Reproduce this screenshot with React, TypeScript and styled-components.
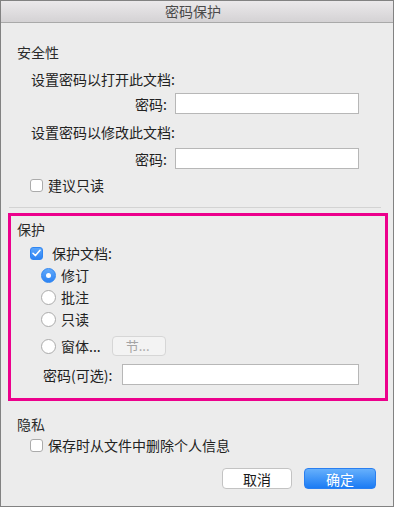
import React from "react";
import styled, { createGlobalStyle } from "styled-components";

const Global = createGlobalStyle`
  html, body { margin: 0; padding: 0; background: #ffffff; }
  body { font-family: "Noto Sans CJK SC", "Noto Sans", sans-serif; }
`;

const Window = styled.div`
  width: 394px;
  height: 507px;
  box-sizing: border-box;
  border: 1px solid #828282;
  background: #ececec;
  display: flex;
  flex-direction: column;
  font-size: 14px;
  color: #222;
`;

const TitleBar = styled.div`
  height: 21px;
  border-bottom: 1px solid #a9a9a9;
  background: linear-gradient(#ebe9eb, #d4d2d4);
  display: flex;
  align-items: center;
  justify-content: center;
  color: #4a4a4a;
  font-size: 14px;
  line-height: 21px;
  padding-right: 8px;
`;

const Body = styled.div`
  display: flex;
  flex-direction: column;
  padding: 0 5px 0 7px;
`;

const Section = styled.div<{ $top: number }>`
  display: flex;
  flex-direction: column;
  padding-left: 9px;
  margin-top: ${(p) => p.$top}px;
`;

const ProtectBox = styled.div`
  margin-top: 5px;
  border: 3px solid #ec008c;
  padding: 3px 0 13px 6px;
  display: flex;
  flex-direction: column;
`;

const Row = styled.div<{ $top?: number; $indent?: number; $h?: number }>`
  display: flex;
  align-items: center;
  height: ${(p) => p.$h ?? 20}px;
  line-height: 20px;
  margin-top: ${(p) => p.$top ?? 0}px;
  padding-left: ${(p) => p.$indent ?? 0}px;
  white-space: nowrap;
`;

const Heading = styled.div`
  height: 20px;
  line-height: 20px;
  color: #2a2a2a;
`;

const FieldLabel = styled.span<{ $w: number; $align?: string; $gap?: number }>`
  width: ${(p) => p.$w}px;
  text-align: ${(p) => p.$align ?? "right"};
  margin-right: ${(p) => p.$gap ?? 8}px;
`;

const TextInput = styled.div<{ $w: number }>`
  width: ${(p) => p.$w}px;
  height: 21px;
  box-sizing: border-box;
  background: #fff;
  border: 1px solid #b7b7b7;
`;

const Separator = styled.div`
  height: 1px;
  background: #d3d3d3;
  margin: 12px 7px 0 1px;
`;

const Box = styled.span<{ $checked?: boolean }>`
  width: 13px;
  height: 13px;
  box-sizing: border-box;
  border-radius: 3px;
  border: 1px solid ${(p) => (p.$checked ? "#2f86f2" : "#ababab")};
  background: ${(p) =>
    p.$checked ? "linear-gradient(#5aa5fb, #2d83f3)" : "#fff"};
  display: inline-flex;
  align-items: center;
  justify-content: center;
  flex: none;
`;

const CheckText = styled.span<{ $gap: number }>`
  margin-left: ${(p) => p.$gap}px;
`;

const RadioCircle = styled.span<{ $on?: boolean }>`
  width: 15px;
  height: 15px;
  box-sizing: border-box;
  border-radius: 50%;
  border: 1px solid ${(p) => (p.$on ? "#2f86f2" : "#ababab")};
  background: ${(p) => (p.$on ? "linear-gradient(#62aafb, #2d83f3)" : "#fff")};
  display: inline-flex;
  align-items: center;
  justify-content: center;
  flex: none;
  &::after {
    content: "";
    display: ${(p) => (p.$on ? "block" : "none")};
    width: 5px;
    height: 5px;
    border-radius: 50%;
    background: #fff;
  }
`;

const SmallButton = styled.div`
  margin-left: 11px;
  width: 54px;
  height: 20px;
  box-sizing: border-box;
  border: 1px solid #d6d6d6;
  border-radius: 4px;
  background: #f3f3f3;
  color: #a4a4a4;
  font-size: 13px;
  line-height: 18px;
  padding-left: 13px;
`;

const Footer = styled.div`
  display: flex;
  justify-content: flex-end;
  gap: 12px;
  margin-top: 13px;
  padding-right: 12px;
`;

const Button = styled.div<{ $primary?: boolean; $w: number }>`
  width: ${(p) => p.$w}px;
  height: 21px;
  box-sizing: border-box;
  border-radius: 4px;
  display: flex;
  align-items: center;
  justify-content: center;
  font-size: 14px;
  border: 1px solid ${(p) => (p.$primary ? "#2a7ff0" : "#c3c3c3")};
  background: ${(p) =>
    p.$primary ? "linear-gradient(#66b0fc, #1b7bf4)" : "#fff"};
  color: ${(p) => (p.$primary ? "#fff" : "#1a1a1a")};
`;

const Check = () => (
  <svg width="9" height="8" viewBox="0 0 9 8">
    <path d="M1 4.2 L3.5 6.6 L8 1.2" stroke="#fff" strokeWidth="1.5" fill="none" strokeLinecap="round" strokeLinejoin="round" />
  </svg>
);

const Radio = ({ on, label }: { on?: boolean; label: string }) => (
  <>
    <RadioCircle $on={on} />
    <CheckText $gap={5}>{label}</CheckText>
  </>
);

export default function App() {
  return (
    <>
      <Global />
      <Window>
        <TitleBar>密码保护</TitleBar>
        <Body>
          <Section $top={19}>
            <Heading>安全性</Heading>
            <Row $top={7} $indent={14}>设置密码以打开此文档:</Row>
            <Row $top={4} $h={21}>
              <FieldLabel $w={150}>密码:</FieldLabel>
              <TextInput $w={184} />
            </Row>
            <Row $top={8} $indent={14}>设置密码以修改此文档:</Row>
            <Row $top={6} $h={21}>
              <FieldLabel $w={150}>密码:</FieldLabel>
              <TextInput $w={184} />
            </Row>
            <Row $top={6} $indent={13}>
              <Box />
              <CheckText $gap={5}>建议只读</CheckText>
            </Row>
          </Section>
          <Separator />
          <ProtectBox>
            <Heading>保护</Heading>
            <Row $top={4} $indent={13}>
              <Box $checked>
                <Check />
              </Box>
              <CheckText $gap={9}>保护文档:</CheckText>
            </Row>
            <Row $top={2} $indent={24}>
              <Radio on label="修订" />
            </Row>
            <Row $top={2} $indent={24}>
              <Radio label="批注" />
            </Row>
            <Row $top={2} $indent={24}>
              <Radio label="只读" />
            </Row>
            <Row $top={7} $indent={24}>
              <Radio label="窗体..." />
              <SmallButton>节...</SmallButton>
            </Row>
            <Row $top={8} $h={21} $indent={26}>
              <FieldLabel $w={70} $align="left" $gap={9}>
                密码(可选):
              </FieldLabel>
              <TextInput $w={237} />
            </Row>
          </ProtectBox>
          <Section $top={13}>
            <Heading>隐私</Heading>
            <Row $top={1} $indent={13}>
              <Box />
              <CheckText $gap={5}>保存时从文件中删除个人信息</CheckText>
            </Row>
          </Section>
          <Footer>
            <Button $w={70}>取消</Button>
            <Button $w={72} $primary>
              确定
            </Button>
          </Footer>
        </Body>
      </Window>
    </>
  );
}
